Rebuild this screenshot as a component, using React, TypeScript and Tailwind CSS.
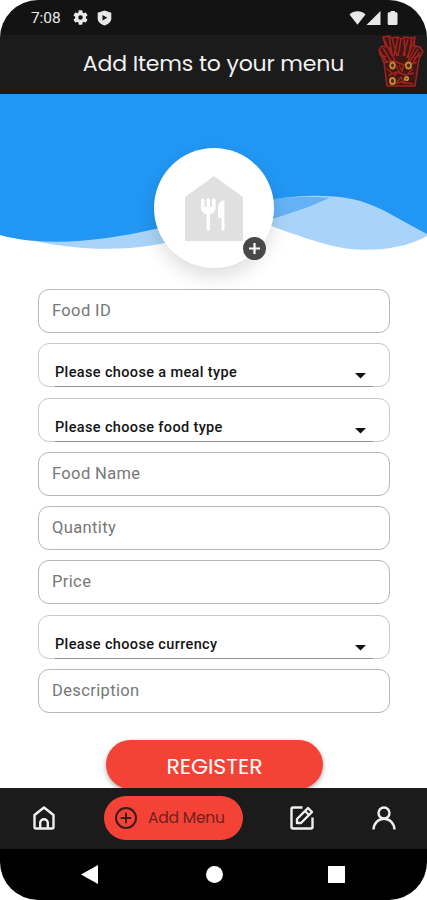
import React from 'react';

interface FormField {
  label: string;
  select?: boolean;
}

const fields: FormField[] = [
  { label: 'Food ID' },
  { label: 'Please choose a meal type', select: true },
  { label: 'Please choose food type', select: true },
  { label: 'Food Name' },
  { label: 'Quantity' },
  { label: 'Price' },
  { label: 'Please choose currency', select: true },
  { label: 'Description' },
];

function StatusBar() {
  return (
    <div className="flex h-[35px] shrink-0 items-center bg-[#131313] pl-[31px] pr-[29px] text-[#e8e8e8]">
      <span className="w-[42px] pt-[2px] font-['Roboto',sans-serif] text-[15.5px] leading-none tracking-[-0.1px]">7:08</span>
      <svg className="h-[15px] w-[15px]" viewBox="2 2 20 20" fill="currentColor">
        <path d="M19.14 12.94c.04-.3.06-.61.06-.94s-.02-.64-.07-.94l2.03-1.58a.5.5 0 0 0 .12-.61l-1.92-3.32a.49.49 0 0 0-.59-.22l-2.39.96a7 7 0 0 0-1.62-.94l-.36-2.54a.48.48 0 0 0-.48-.41h-3.84a.47.47 0 0 0-.47.41l-.36 2.54c-.59.24-1.13.57-1.62.94l-2.39-.96a.48.48 0 0 0-.59.22L2.74 8.87a.47.47 0 0 0 .12.61l2.03 1.58c-.05.3-.09.63-.09.94s.02.64.07.94l-2.03 1.58a.5.5 0 0 0-.12.61l1.92 3.32c.12.22.37.29.59.22l2.39-.96c.5.38 1.03.7 1.62.94l.36 2.54c.05.24.24.41.48.41h3.84c.24 0 .44-.17.47-.41l.36-2.54a7 7 0 0 0 1.62-.94l2.39.96c.22.08.47 0 .59-.22l1.92-3.32a.47.47 0 0 0-.12-.61zM12 15a3 3 0 1 1 0-6 3 3 0 0 1 0 6z" />
      </svg>
      <svg className="ml-[9px] h-[16px] w-[15px]" viewBox="0 0 15 16" fill="none">
        <path d="M7.5.5 14.300 2.800v5.400c0 3.400-2.700 6-6.800 7.300C3.400 14.200.7 11.600.7 8.200V2.800z" fill="currentColor" />
        <path d="M5.500 5 10.300 7.700l-4.800 2.800z" fill="#131313" />
      </svg>
      <svg className="ml-auto h-[16px] w-[49px]" viewBox="0 0 49 16" fill="currentColor">
        <path d="M.5 4.600C4.800.200 12.200.200 16.500 4.600L8.500 14.800z" />
        <path d="M31.500 1v14h-14z" />
        <path d="M40 2.200h1.600V1h4.300v1.200h1.300q1.300 0 1.300 1.300v10.200q0 1.300-1.300 1.300H40q-1.300 0-1.300-1.300V3.500q0-1.300 1.300-1.300z" />
      </svg>
    </div>
  );
}

function FriesLogo() {
  return (
    <svg className="absolute right-[3px] top-0 h-[53px] w-[47px]" viewBox="0 0 47 53" fill="#421615" stroke="#9f2420" strokeWidth="1.5" strokeLinejoin="round">
      <path d="M2 15 5 11l4 1L6 2l6-1 3 2 6-1 3 2 3-2 8 1 3-1-1 9 6 1 3 5-4 7-4 27H10L7 28z" />
      <g fill="none">
        <path d="M6 2l9 19M12 2l3 16M15 3l5 18M21 3l-4 18M24 4l-3 17M27 3l1 18M31 4l-5 17M35 3l-4 20M37 6l-7 17" />
        <path d="m3 16 7 12M6 13l9 15M12 12l6 14M39 10l-8 16M43 17l-8 12M41 14l-9 14M2 19l7 3M44 20l-7 3" />
        <path d="M7 28q8-4 15 0t18-1M10 34l5 4-3 3M18 29l4 7-5 5M22 30l3 6M27 29l-2 8M36 34l-5 4M12 40l8-3 8 3 9-2M20 47l4-5 4 7M13 50l11-3 12 2" />
      </g>
      <g fill="#542018" stroke="#c08c28" strokeWidth="1.800">
        <ellipse cx="15.500" cy="30.500" rx="2.300" ry="3" />
        <ellipse cx="31.500" cy="30.500" rx="2.600" ry="3" />
        <ellipse cx="15.500" cy="46" rx="2.500" ry="3" />
        <circle cx="29.500" cy="43.500" r="1.700" />
      </g>
    </svg>
  );
}

function Header() {
  return (
    <header className="relative flex h-[59px] shrink-0 items-center justify-center border-b border-[#10202d] bg-[#1b1b1b]">
      <h1 className="whitespace-nowrap font-['Poppins','Inter',sans-serif] text-[22px] leading-none tracking-[-0.15px] text-[#f1f1f1]">
        Add Items to your menu
      </h1>
      <FriesLogo />
    </header>
  );
}

function Banner() {
  return (
    <div className="relative h-[195px] shrink-0">
      <svg className="absolute inset-0 h-full w-full" viewBox="0 0 427 195">
        <path d="M0 0H427V142C400 157 360 160 325 150C290 141 260 126 235 118L190 142C145 158 85 159 25 145L0 140z" fill="#a9d4f9" />
        <path d="M0 0H427V140C386 119 369 102 321 102C270 100 214 121 155 135C108 146 46 154 0 141z" fill="#2196f3" />
        <path d="M270 105.500Q301 101 330 104L327 105L309 113L270 126z" fill="#64b2f5" />
        <path d="M309 113L330 104L340 106V125L270 150V126z" fill="#a9d4f9" />
        <path d="M270 126V150L235 118z" fill="#a9d4f9" />
        <path d="M230 195V118C260 126 290 141 325 150L340 195z" fill="#fff" />
      </svg>
      <div className="absolute left-[154px] top-[54px] flex h-[120px] w-[120px] items-center justify-center rounded-full bg-white shadow-[0_9px_18px_rgba(0,0,0,0.13)]">
        <svg className="h-[65px] w-[58px]" viewBox="0 0 58 65">
          <path d="M0 21 29 0l29 21v44H0z" fill="#e0e0e0" />
          <path d="M17.800 24v8q0 4 5.500 5 5.500-1 5.500-5v-8M23.300 24v29" fill="none" stroke="#fff" strokeWidth="3.400" strokeLinecap="round" />
          <path d="M18 31h11v4l-5 3-6-3z" fill="#fff" />
          <path d="M39.500 24v29q0 1.500-1.500 1.500T36.500 53V42H33V32q0-6.500 6.500-8z" fill="#fff" />
        </svg>
        <div className="absolute left-[89px] top-[89px] flex h-[23px] w-[23px] items-center justify-center rounded-full bg-[#484848]">
          <svg className="h-[13px] w-[13px]" viewBox="0 0 13 13" stroke="#fff" strokeWidth="2.200">
            <path d="M6.500 1v11M1 6.500h11" />
          </svg>
        </div>
      </div>
    </div>
  );
}

function Field({ label, select }: FormField) {
  if (select) {
    return (
      <div className="flex h-[44px] flex-col justify-end rounded-[11px] border border-[#c8c8c8] pl-4 pr-4">
        <div className="-mb-px flex h-[23px] items-start justify-between border-b-[1.500px] border-[#929292] pr-[7px]">
          <span className="h-[16px] overflow-hidden whitespace-nowrap font-['Roboto',sans-serif] text-[14.5px] font-medium leading-[18px] tracking-[0.36px] text-[#151515]">
            {label}
          </span>
          <svg className="mt-[9px] h-[6px] w-[11px]" viewBox="0 0 11 6">
            <path d="M0 0h11L5.500 5.500z" fill="#111" />
          </svg>
        </div>
      </div>
    );
  }

  return (
    <div className="flex h-[44px] items-center rounded-[11px] border border-[#b7b7b7] pl-[13px] font-['Roboto',sans-serif] text-[16.5px] tracking-[0.37px] text-[#777]">
      {label}
    </div>
  );
}

function BottomNav() {
  return (
    <nav className="relative flex h-[61px] shrink-0 items-center bg-[#1b1b1b] pb-px text-[#f0f0f0]">
      <svg className="ml-[33px] h-[24px] w-[22px]" viewBox="0 0 22 24" fill="none" stroke="currentColor" strokeWidth="2.400" strokeLinejoin="round">
        <path d="M1.500 9 11 1.500 20.500 9v12q0 1.500-1.500 1.500H3q-1.500 0-1.500-1.500z" />
        <path d="M7.200 22v-5a3.800 3.800 0 0 1 7.600 0v5" />
      </svg>
      <button className="ml-[49px] flex h-[44px] w-[139px] items-center rounded-full bg-[#f44336] pl-[10px] text-[#3b1c19]">
        <svg className="h-[24px] w-[24px] shrink-0" viewBox="0 0 24 24" fill="none" stroke="currentColor" strokeWidth="2" strokeLinecap="round">
          <circle cx="12" cy="12" r="10" />
          <path d="M12 7.500v9M7.500 12h9" />
        </svg>
        <span className="ml-[10px] whitespace-nowrap font-['Poppins','Inter',sans-serif] text-[15.5px] leading-none tracking-[-0.2px] text-[#6e211c]">Add Menu</span>
      </button>
      <svg className="ml-[47px] h-[24px] w-[24px]" viewBox="0 0 24 24" fill="none" stroke="currentColor" strokeWidth="2.400" strokeLinejoin="round">
        <path d="M12.500 1.500H3q-1.500 0-1.500 1.500v18q0 1.500 1.500 1.500h18q1.500 0 1.500-1.500v-9.500" />
        <path d="M7 13V17h4L22 6l-4-4zM15 5l4 4" />
      </svg>
      <svg className="ml-[58px] h-[24px] w-[24px]" viewBox="0 0 24 24" fill="none" stroke="currentColor" strokeWidth="2.400">
        <circle cx="12" cy="7" r="5.500" />
        <path d="M1.500 23.500C2 17 6.500 12.800 12 12.800s10 4.200 10.500 10.700" />
      </svg>
    </nav>
  );
}

function SystemNav() {
  return (
    <div className="flex h-[51px] shrink-0 items-center bg-black text-white">
      <svg className="ml-[81px] h-[19px] w-[17px]" viewBox="0 0 17 19">
        <path d="M17 0v19L0 9.500z" fill="currentColor" />
      </svg>
      <div className="ml-[108px] h-[17px] w-[17px] rounded-full bg-white" />
      <div className="ml-[105px] h-[17px] w-[17px] bg-white" />
    </div>
  );
}

export default function App() {
  return (
    <div className="flex h-[900px] w-[427px] flex-col overflow-hidden rounded-[38px] bg-white">
      <StatusBar />
      <Header />
      <main className="flex min-h-0 grow flex-col overflow-hidden">
        <Banner />
        <form className="flex flex-col gap-[10.3px] pl-[38px] pr-[37px]">
          {fields.map((field) => (
            <Field key={field.label} {...field} />
          ))}
        </form>
        <button className="ml-[106px] mt-[27px] flex h-[49px] w-[217px] shrink-0 items-center justify-center rounded-full bg-[#f44336] pt-[4px] font-['Poppins','Inter',sans-serif] text-[22px] leading-none tracking-[-0.1px] text-white shadow-[0_2px_5px_rgba(0,0,0,0.35)]">
          REGISTER
        </button>
      </main>
      <BottomNav />
      <SystemNav />
    </div>
  );
}
